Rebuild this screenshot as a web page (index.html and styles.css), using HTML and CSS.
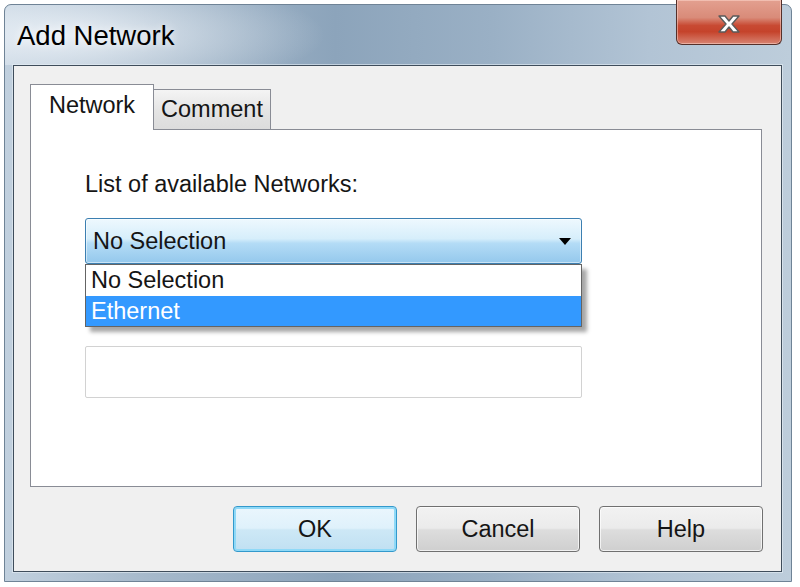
FILE: index.html
```html
<!DOCTYPE html>
<html>
  <head>
    <meta charset='utf-8'>
    <title>Add Network</title>
    <link rel="stylesheet" href="styles.css">
  </head>
  <body>
    <div class="window">
      <div class="titlebar">
        <span class="title">Add Network</span>
        <div class="close">
          <svg width="26" height="20" viewBox="0 0 26 20">
            <polygon points="3,2 9,2 13,7 17,2 23,2 16,10 23,18 17,18 13,13 9,18 3,18 10,10" fill="#fff" stroke="#5a5a5a" stroke-width="1.4" stroke-linejoin="round"/>
          </svg>
        </div>
      </div>
      <div class="client">
        <div class="tabs">
          <div class="tab selected">Network</div>
          <div class="tab">Comment</div>
        </div>
        <div class="panel">
          <div class="label">List of available Networks:</div>
          <div class="combo-wrap">
            <div class="combo">
              <span>No Selection</span>
              <svg class="arrow" width="12" height="7" viewBox="0 0 12 7"><polygon points="0,0 12,0 6,7" fill="#000"/></svg>
            </div>
            <div class="droplist">
              <div class="item">No Selection</div>
              <div class="item active">Ethernet</div>
            </div>
          </div>
          <div class="field"></div>
        </div>
        <div class="buttons">
          <div class="btn default">OK</div>
          <div class="btn">Cancel</div>
          <div class="btn">Help</div>
        </div>
      </div>
    </div>
  </body>
</html>
```

FILE: styles.css
```css
* {
    font-family: "Liberation Sans", Arial, sans-serif;
}
body {
    margin: 0;
    background: #fff;
    color: #151515;
}
.window {
    margin: 4px 0 0 4px;
    width: 788px;
    height: 578px;
    box-sizing: border-box;
    border: 1px solid #6f8396;
    border-radius: 7px 7px 0 0;
    background: linear-gradient(to right, #c1d0de 0%, #a6b9cb 18%, #8ca4bb 42%, #9ab0c5 62%, #b2c4d5 82%, #bdcddb 100%);
    display: flex;
    flex-direction: column;
    padding: 0 9px 9px 8px;
}
.titlebar {
    height: 60px;
    display: flex;
    justify-content: space-between;
    align-items: flex-start;
    margin: 0 -9px 0 -8px;
    padding: 0 9px 0 12px;
    border-radius: 7px 7px 0 0;
    background: radial-gradient(ellipse 260px 60px at 60px 30px, rgba(240, 245, 250, 0.85), rgba(240, 245, 250, 0));
}
.title {
    font-size: 27.5px;
    line-height: 30px;
    margin-top: 16px;
    color: #000;
    text-shadow: 0 0 8px rgba(255, 255, 255, 0.9);
}
.close {
    width: 106px;
    height: 45px;
    margin-top: -5px;
    box-sizing: border-box;
    border: 1px solid #55302a;
    border-top: none;
    border-radius: 0 0 6px 6px;
    background: linear-gradient(#e3a090 0%, #d98b79 40%, #c84a33 58%, #c5432b 72%, #d88472 100%);
    box-shadow: inset 0 0 0 1px rgba(255, 220, 210, 0.5);
    display: flex;
    align-items: center;
    justify-content: center;
    padding-top: 4px;
}
.client {
    flex: 1;
    background: #f0f0f0;
    border: 1px solid #3f4d5b;
    box-shadow: 0 0 0 1px rgba(230, 238, 245, 0.6);
    padding: 18px 19px 19px 16px;
    display: flex;
    flex-direction: column;
}
.tabs {
    display: flex;
    align-items: flex-end;
    height: 45px;
}
.tab {
    width: 118px;
    height: 40px;
    box-sizing: border-box;
    border: 1px solid #898c95;
    border-bottom: none;
    background: linear-gradient(#f4f4f4, #e4e4e4 55%, #dcdcdc);
    font-size: 23.5px;
    line-height: 26px;
    padding-top: 6px;
    text-align: center;
}
.tab.selected {
    width: 124px;
    height: 46px;
    background: #fff;
    padding-top: 7px;
    margin-bottom: -1px;
    margin-right: -1px;
    position: relative;
    z-index: 1;
}
.panel {
    height: 358px;
    box-sizing: border-box;
    border: 1px solid #898c95;
    background: #fff;
    padding: 41px 0 0 54px;
}
.label {
    font-size: 23.5px;
    line-height: 26px;
}
.combo-wrap {
    position: relative;
    width: 497px;
    margin-top: 21px;
}
.combo {
    height: 46px;
    box-sizing: border-box;
    border: 1px solid #3c7fb1;
    border-radius: 3px;
    background: linear-gradient(#eef8fe 0%, #d6eefb 45%, #b4dcf6 55%, #94c8ec 100%);
    box-shadow: inset 0 0 0 1px rgba(255, 255, 255, 0.5);
    display: flex;
    align-items: center;
    justify-content: space-between;
    padding: 0 10px 0 7px;
    font-size: 23.5px;
}
.droplist {
    position: absolute;
    top: 46px;
    left: 0;
    width: 497px;
    box-sizing: border-box;
    border: 1px solid #646464;
    background: #fff;
    box-shadow: 5px 5px 4px rgba(0, 0, 0, 0.35);
    z-index: 2;
}
.item {
    height: 30px;
    line-height: 30px;
    padding-left: 5px;
    font-size: 23.5px;
}
.item.active {
    margin-top: 1px;
    background: #3399ff;
    color: #fff;
}
.field {
    width: 497px;
    height: 52px;
    box-sizing: border-box;
    margin-top: 82px;
    border: 1px solid #d2d2d2;
    border-radius: 2px;
}
.buttons {
    display: flex;
    justify-content: flex-end;
    gap: 19px;
    margin-top: 19px;
    margin-right: -1px;
}
.btn {
    width: 164px;
    height: 46px;
    box-sizing: border-box;
    border: 1px solid #707070;
    border-radius: 4px;
    background: linear-gradient(#f2f2f2 0%, #ebebeb 48%, #dddddd 52%, #cfcfcf 100%);
    box-shadow: inset 0 0 0 1px rgba(255, 255, 255, 0.7);
    font-size: 23.5px;
    display: flex;
    align-items: center;
    justify-content: center;
}
.btn.default {
    border: 1px solid #3399cc;
    background: linear-gradient(#eaf6fd 0%, #dff1fb 48%, #cde8f6 52%, #c0e0f2 100%);
    box-shadow: inset 0 0 0 2px #8fd9f7;
}
```
